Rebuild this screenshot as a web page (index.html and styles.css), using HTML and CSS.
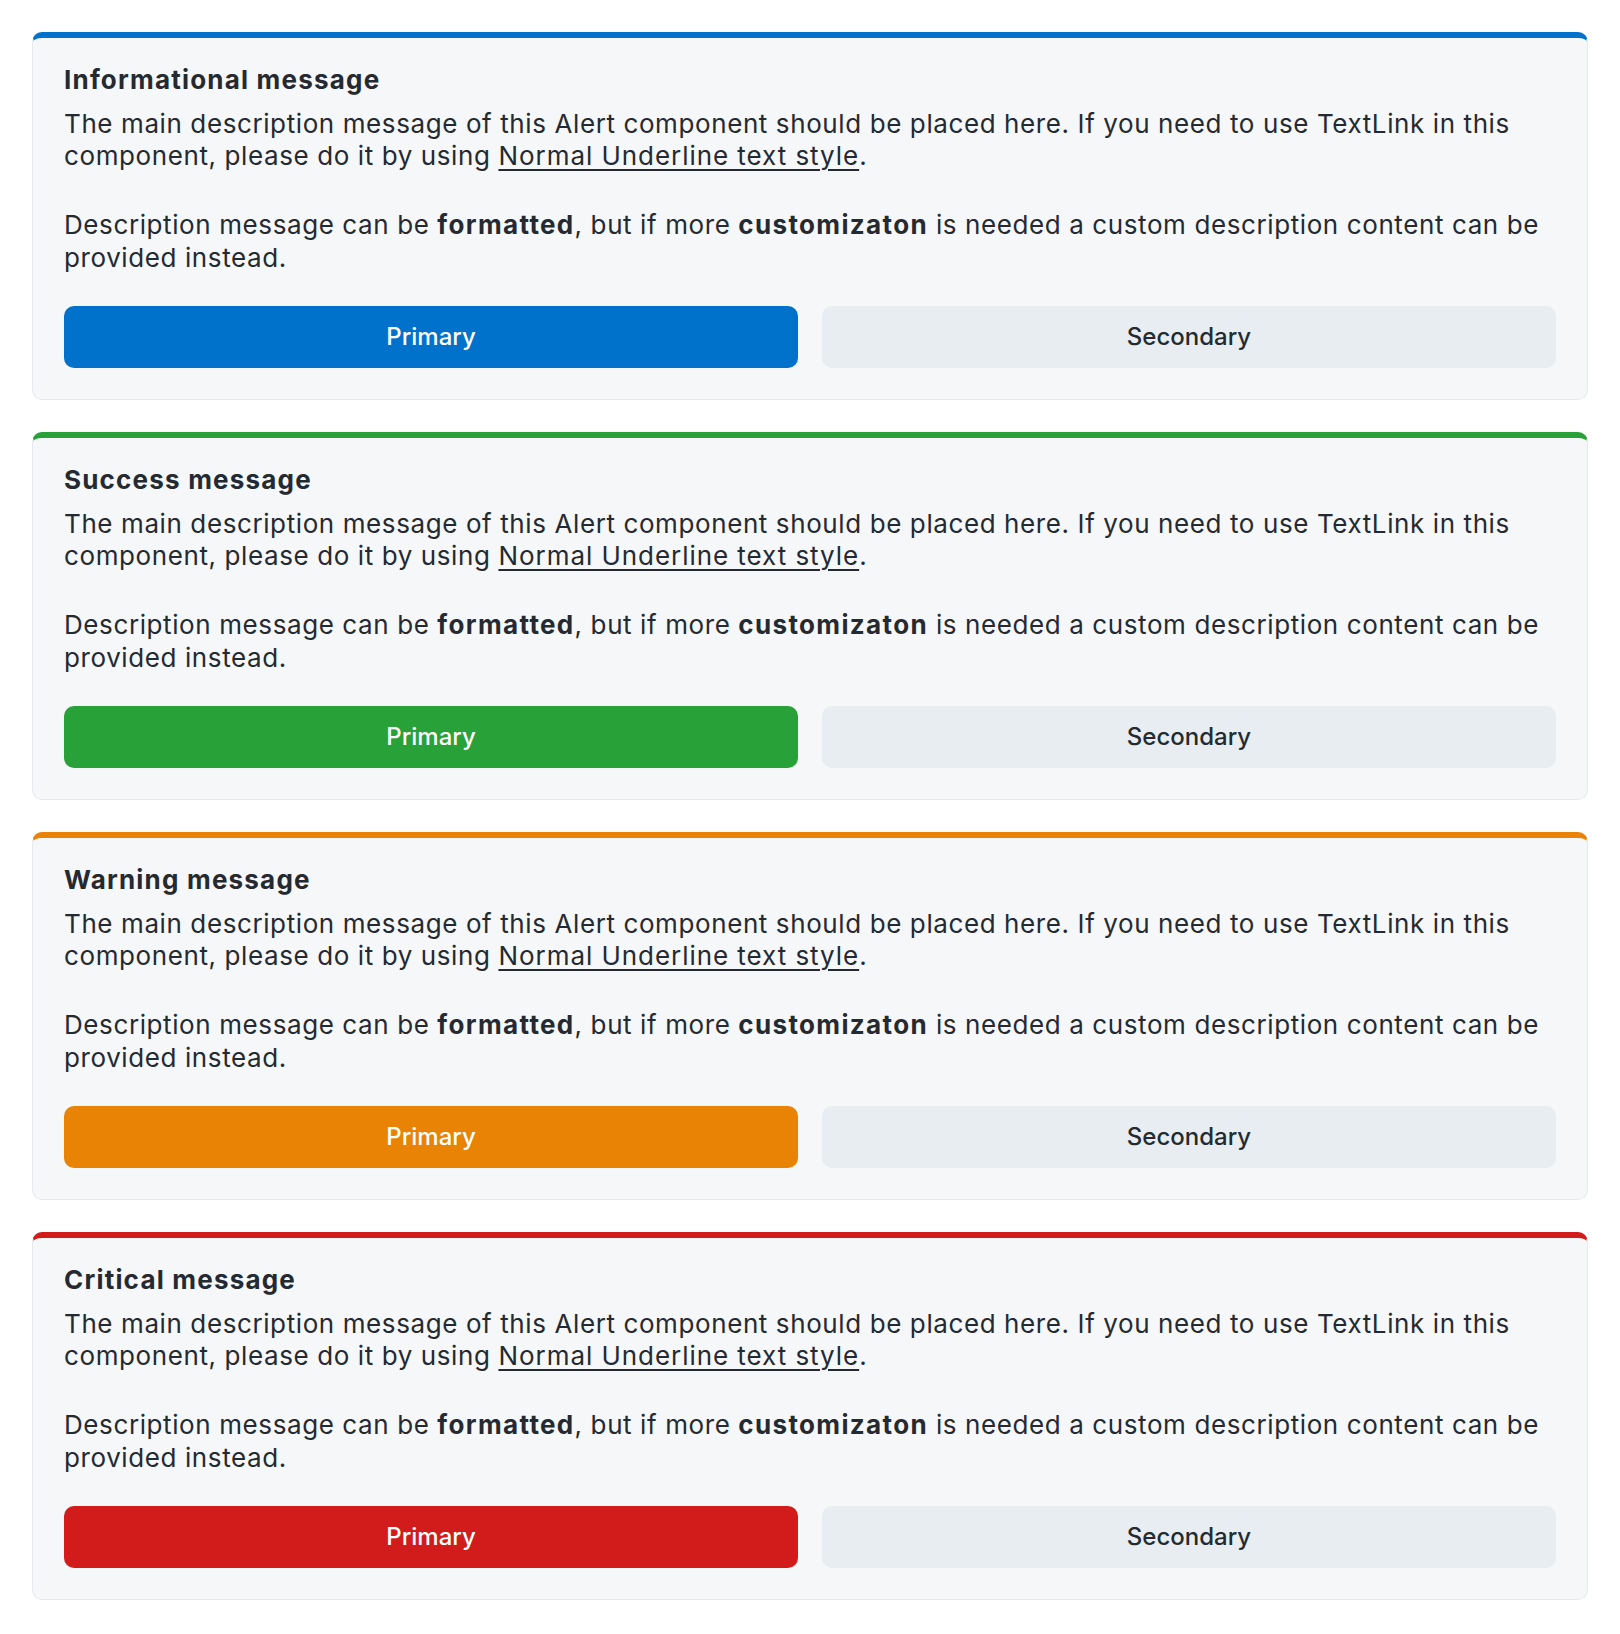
FILE: index.html
```html
<!DOCTYPE html>
<html lang="en">
<head>
<meta charset="utf-8">
<title>Alerts</title>
<link rel="stylesheet" href="styles.css">
</head>
<body>
<div class="stack">
  <section class="alert alert-info">
    <h2 class="alert-title">Informational message</h2>
    <div class="alert-desc">
      <p>The main description message of this Alert component should be placed here. If you need to use TextLink in this component, please do it by using <a href="#" class="link">Normal Underline text style</a>.</p>
      <p>Description message can be <b>formatted</b>, but if more <b>customizaton</b> is needed a custom description content can be provided instead.</p>
    </div>
    <div class="actions">
      <button class="btn btn-primary">Primary</button>
      <button class="btn btn-secondary">Secondary</button>
    </div>
  </section>
  <section class="alert alert-success">
    <h2 class="alert-title">Success message</h2>
    <div class="alert-desc">
      <p>The main description message of this Alert component should be placed here. If you need to use TextLink in this component, please do it by using <a href="#" class="link">Normal Underline text style</a>.</p>
      <p>Description message can be <b>formatted</b>, but if more <b>customizaton</b> is needed a custom description content can be provided instead.</p>
    </div>
    <div class="actions">
      <button class="btn btn-primary">Primary</button>
      <button class="btn btn-secondary">Secondary</button>
    </div>
  </section>
  <section class="alert alert-warning">
    <h2 class="alert-title">Warning message</h2>
    <div class="alert-desc">
      <p>The main description message of this Alert component should be placed here. If you need to use TextLink in this component, please do it by using <a href="#" class="link">Normal Underline text style</a>.</p>
      <p>Description message can be <b>formatted</b>, but if more <b>customizaton</b> is needed a custom description content can be provided instead.</p>
    </div>
    <div class="actions">
      <button class="btn btn-primary">Primary</button>
      <button class="btn btn-secondary">Secondary</button>
    </div>
  </section>
  <section class="alert alert-critical">
    <h2 class="alert-title">Critical message</h2>
    <div class="alert-desc">
      <p>The main description message of this Alert component should be placed here. If you need to use TextLink in this component, please do it by using <a href="#" class="link">Normal Underline text style</a>.</p>
      <p>Description message can be <b>formatted</b>, but if more <b>customizaton</b> is needed a custom description content can be provided instead.</p>
    </div>
    <div class="actions">
      <button class="btn btn-primary">Primary</button>
      <button class="btn btn-secondary">Secondary</button>
    </div>
  </section>
</div>
</body>
</html>
```
FILE: styles.css
```css
* { box-sizing: border-box; }
html, body { margin: 0; background: #ffffff; }
body {
  font-family: Inter, "Noto Sans", "Liberation Sans", sans-serif;
  color: #252a31;
  padding: 32px;
}
.stack {
  display: flex;
  flex-direction: column;
  gap: 32px;
}
.alert {
  --accent: #0172cb;
  background: #f5f7f9;
  border: 1px solid #e6eaee;
  border-top: 6px solid var(--accent);
  border-radius: 10px;
  padding: 26px 31px 31px;
  height: 368px;
  display: flex;
  flex-direction: column;
}
.alert-info { --accent: #0172cb; }
.alert-success { --accent: #28a138; }
.alert-warning { --accent: #e98305; }
.alert-critical { --accent: #d21c1c; }

.alert-title {
  margin: 0;
  font-size: 26px;
  line-height: 32.5px;
  font-weight: 700;
  letter-spacing: 1.2px;
}
.alert-desc {
  margin-top: 11px;
  font-size: 26px;
  line-height: 32.5px;
  letter-spacing: 0.6px;
}
.alert-desc p { margin: 0; }
.alert-desc p + p { margin-top: 36.5px; }
.alert-desc b { font-weight: 700; letter-spacing: 1.35px; }
.link {
  color: #252a31;
  letter-spacing: 0.95px;
  text-decoration: underline;
  text-decoration-thickness: 2px;
  text-underline-offset: 4px;
}
.actions {
  margin-top: 31.5px;
  display: grid;
  grid-template-columns: 1fr 1fr;
  gap: 24px;
}
.btn {
  height: 62px;
  border: 0;
  border-radius: 10px;
  font-family: inherit;
  font-size: 24px;
  font-weight: 500;
  cursor: pointer;
}
.btn-primary {
  background: var(--accent);
  color: #ffffff;
}
.btn-secondary {
  background: #e8edf1;
  color: #252a31;
}
```
